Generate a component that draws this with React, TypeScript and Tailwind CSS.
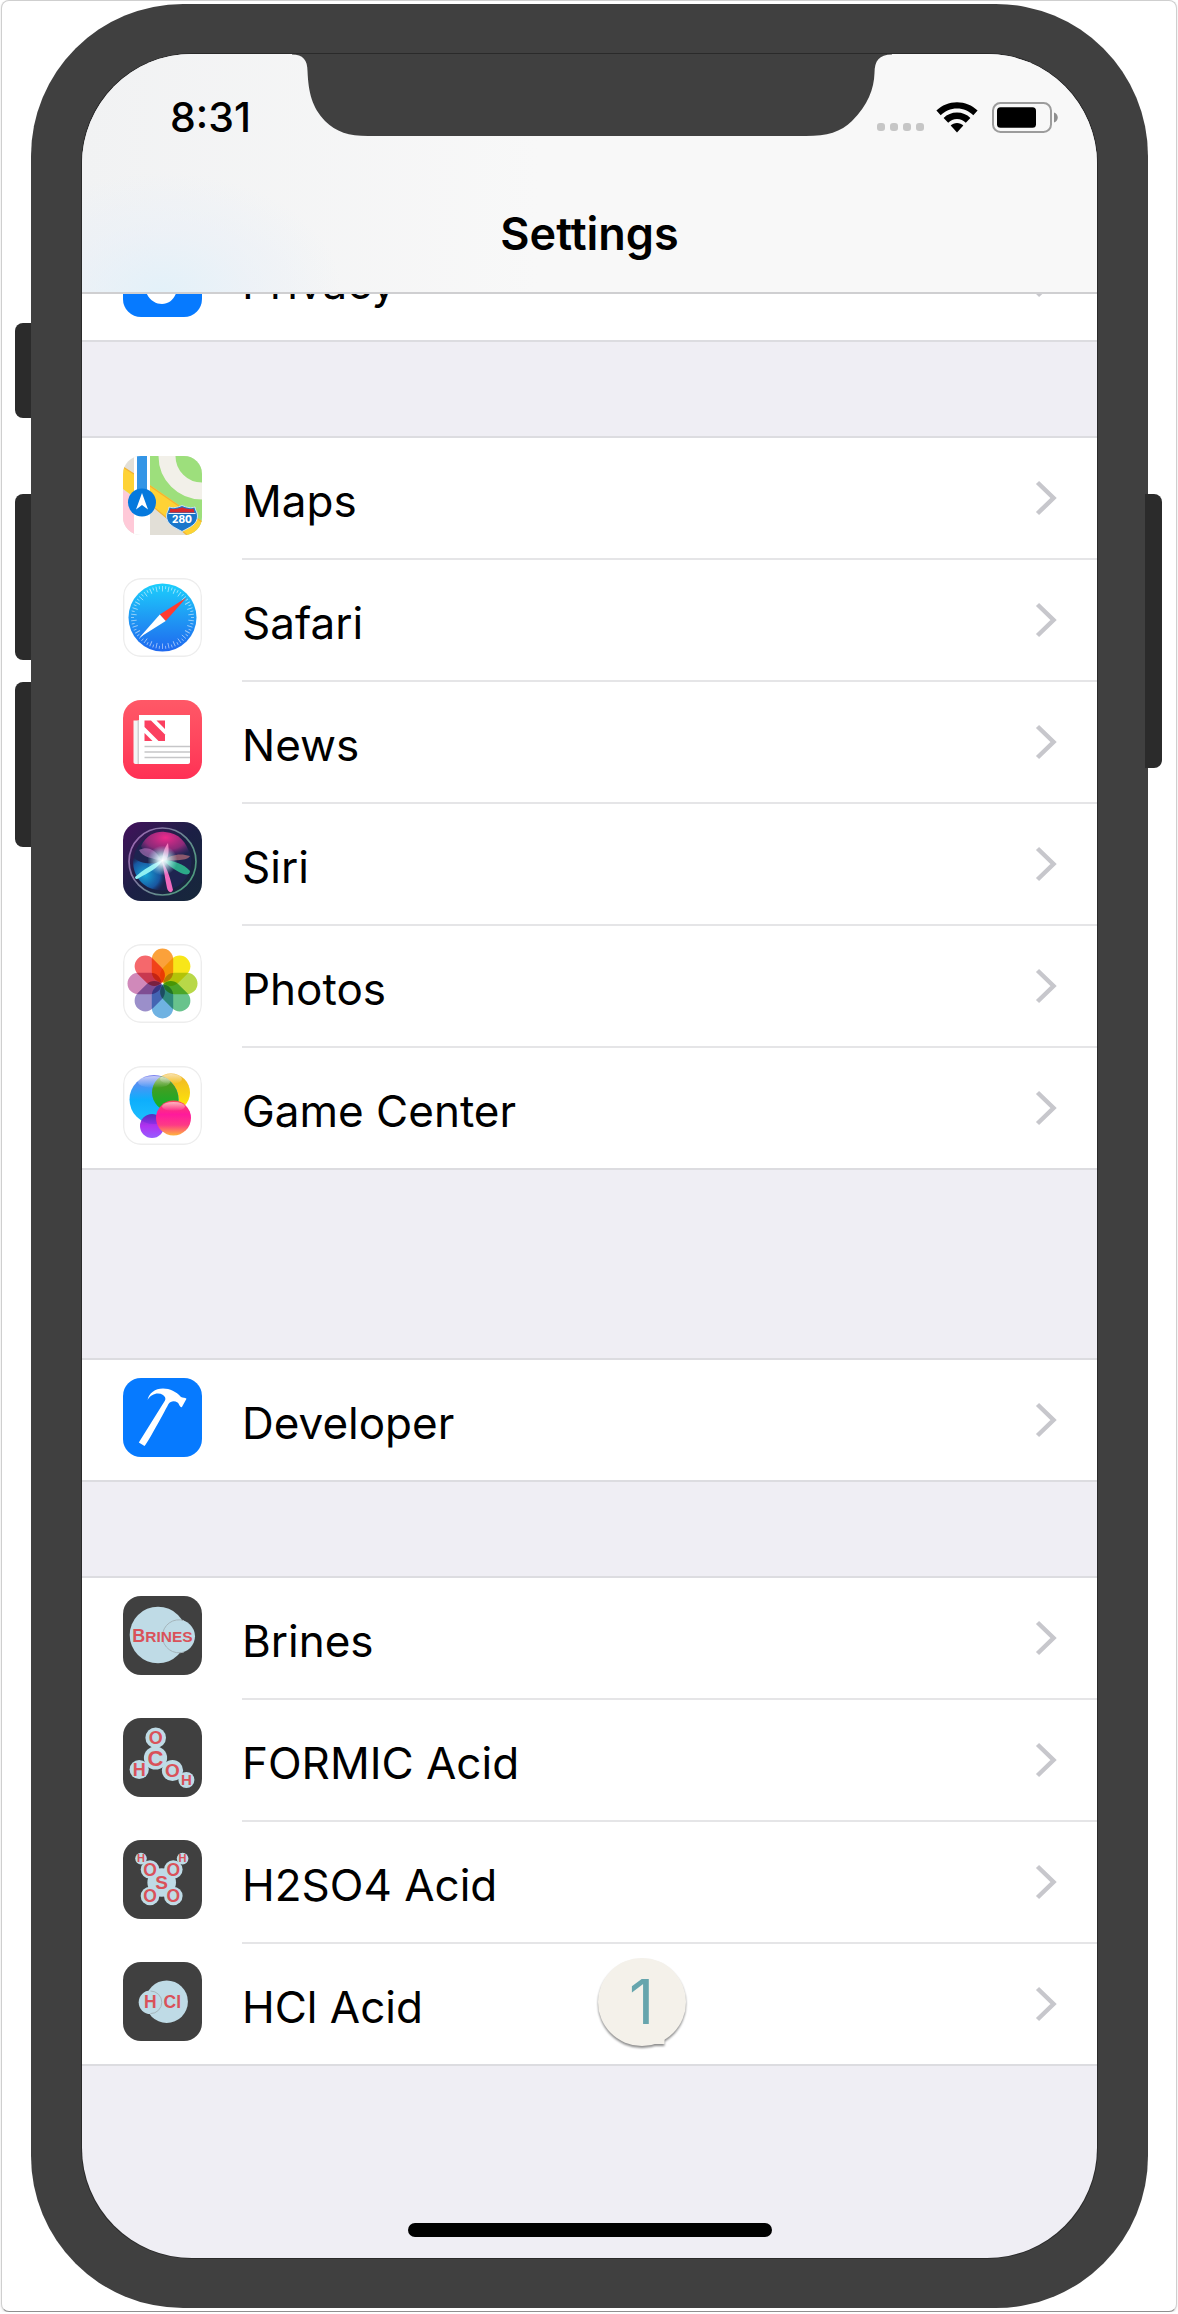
import React from 'react';

const ATOM_FILL = '#bfdbe6';
const ATOM_TEXT = '#d9525a';

interface Atom {
  label: string;
  x: number;
  y: number;
  r: number;
  size: number;
}

const formicAtoms: Atom[] = [
  { label: 'O', x: 32.7, y: 19.7, r: 10.3, size: 18 },
  { label: 'C', x: 32.5, y: 40, r: 11.6, size: 22 },
  { label: 'H', x: 16.2, y: 51.5, r: 9.6, size: 18 },
  { label: 'O', x: 49.5, y: 52.5, r: 10.6, size: 19 },
  { label: 'H', x: 63.4, y: 62, r: 8, size: 15 },
];

const sulfuricAtoms: Atom[] = [
  { label: 'S', x: 38.7, y: 42.5, r: 14.3, size: 19 },
  { label: 'H', x: 18, y: 18.6, r: 5.8, size: 11 },
  { label: 'H', x: 59.6, y: 18.6, r: 5.8, size: 11 },
  { label: 'O', x: 27, y: 29.5, r: 9.3, size: 17.5 },
  { label: 'O', x: 50.3, y: 29.5, r: 9.3, size: 17.5 },
  { label: 'O', x: 27, y: 56, r: 9.3, size: 17.5 },
  { label: 'O', x: 50.3, y: 56, r: 9.3, size: 17.5 },
];

const petals = ['#fba13a', '#f8e619', '#b8d848', '#68c38c', '#6fb2e2', '#9b8fca', '#d089ba', '#f5686c'];

const Tile: React.FC<{ className: string; children: React.ReactNode }> = ({ className, children }) => (
  <svg viewBox="0 0 79 79" aria-hidden="true" className={`h-[79px] w-[79px] shrink-0 rounded-[18px] ${className}`}>
    {children}
  </svg>
);

const OutlineRect = () => <rect x="0.7" y="0.7" width="77.6" height="77.6" rx="17.5" fill="none" stroke="#ededed" strokeWidth="1.4" />;

const Atoms: React.FC<{ atoms: Atom[] }> = ({ atoms }) => (
  <Tile className="bg-[#404040]">
    {atoms.map((atom, index) => (
      <circle key={index} cx={atom.x} cy={atom.y} r={atom.r} fill={ATOM_FILL} />
    ))}
    {atoms.map((atom, index) => (
      <text
        key={index}
        x={atom.x}
        y={atom.y + atom.size * 0.35}
        fontSize={atom.size}
        textAnchor="middle"
        fill={ATOM_TEXT}
        className="font-['Liberation_Sans',sans-serif] font-bold"
      >
        {atom.label}
      </text>
    ))}
  </Tile>
);

const PrivacyIcon = () => (
  <Tile className="bg-[#067aff]">
    <path d="M22 34V20h6V12h6V9h6v3h6v5h6v17c3 0 5 2 4 6l-2 12c-2 9-8 14-15 14S24 61 22 50z" fill="#fff" />
  </Tile>
);

const MapsIcon = () => (
  <Tile className="bg-[#e2dfd7]">
    <path d="M0 11l11 7v23L0 33z" fill="#fed235" />
    <path d="M0 11l11 7" stroke="#f2b233" strokeWidth="1.2" />
    <path d="M0 34l11 8v37H0z" fill="#ffc9d8" />
    <rect x="27" width="52" height="79" fill="#9ddf7c" />
    <circle cx="79" cy="0" r="35" fill="none" stroke="#f2f0e9" strokeWidth="17" />
    <path d="M27 45l38 34H27z" fill="#e2dfd7" />
    <path d="M27 29l52 36v14H64L27 48z" fill="#fed235" />
    <path d="M27 30l52 36M27 48l37 31" stroke="#f2b233" strokeWidth="1.2" />
    <rect x="11" width="16" height="79" fill="#fff" />
    <rect x="14" width="10" height="40" fill="#3395e6" />
    <circle cx="19" cy="46.5" r="14" fill="#0579dd" />
    <path d="M19 37l6 16.5-6-4.5-6 4.5z" fill="#fff" />
    <path
      d="M46 51c4 1.500 8 .5 13-1.500 5 2 9 3 13 1.500 0 3 2.500 5 2.500 9 0 8-7 11-15.500 15.500C50.500 71 43.500 68 43.500 60c0-4 2.500-6 2.500-9z"
      fill="#1876cb"
      stroke="#cfe4f5"
      strokeWidth="1"
    />
    <path d="M47.500 52.500c4 1 7 .5 11.500-1.200 4.500 1.700 7.500 2.200 11.500 1.200l1 4h-25z" fill="#d6262c" />
    <path d="M45.500 57.500h27" stroke="#e9f2fa" strokeWidth="1.2" />
    <text x="59" y="67" fontSize="10" textAnchor="middle" fill="#fff" className="font-[Inter,sans-serif] font-extrabold">
      280
    </text>
  </Tile>
);

const SafariIcon = () => (
  <Tile className="bg-white">
    <defs>
      <linearGradient id="safari" x1="0" y1="0" x2="0" y2="1">
        <stop offset="0" stopColor="#1ccffc" />
        <stop offset="0.5" stopColor="#1f9af4" />
        <stop offset="1" stopColor="#1f68ef" />
      </linearGradient>
    </defs>
    <OutlineRect />
    <circle cx="39.500" cy="39.500" r="34" fill="url(#safari)" />
    {Array.from({ length: 60 }, (_, i) => (
      <path
        key={i}
        d={i % 2 ? 'M39.500 8v3' : 'M39.500 8v5.500'}
        stroke="#fff"
        strokeOpacity="0.55"
        strokeWidth="0.9"
        transform={`rotate(${i * 6} 39.500 39.500)`}
      />
    ))}
    <path d="M63.500 19.500L42.700 42.900 36.800 36.500z" fill="#ff3b30" />
    <path d="M16.500 59.500L36.800 36.500 42.700 42.900z" fill="#fff" />
  </Tile>
);

const NewsIcon = () => (
  <Tile className="bg-linear-to-b from-[#ff5867] to-[#ff3055]">
    <path d="M10.500 20.500H17v43.500h-4.500c-1.200 0-2-.8-2-2z" fill="#f4f4f4" />
    <path d="M14.500 20.500H17V64h-2.500z" fill="#cfcfd1" />
    <path d="M16 15h51v47c0 1.200-.8 2-2 2H16z" fill="#fff" />
    <path d="M21.500 20.500h6.500L42 34.500V41h-6.500L21.500 27z" fill="#fb4060" />
    <path d="M33.500 20.500H42V29zM21.500 33l8 8h-8z" fill="#fb4060" />
    <path d="M21.500 46.500H67M21.500 52H67M21.500 57.500H67" stroke="#c6c6c8" strokeWidth="1.7" />
  </Tile>
);

const SiriIcon = () => (
  <Tile className="bg-linear-to-br from-[#420f5c] via-[#1b1f45] to-[#16283a]">
    <defs>
      <radialGradient id="siriPink" cx="0.5" cy="0.2" r="0.7">
        <stop offset="0" stopColor="#ee2a8c" />
        <stop offset="0.6" stopColor="#b02c86" stopOpacity="0.75" />
        <stop offset="1" stopColor="#6b2a80" stopOpacity="0" />
      </radialGradient>
      <radialGradient id="siriBlue" cx="0.35" cy="0.55" r="0.6">
        <stop offset="0" stopColor="#16a9d8" />
        <stop offset="0.7" stopColor="#1763b4" stopOpacity="0.8" />
        <stop offset="1" stopColor="#123a72" stopOpacity="0" />
      </radialGradient>
      <radialGradient id="siriGlow">
        <stop offset="0" stopColor="#fff" />
        <stop offset="0.3" stopColor="#e4fbff" stopOpacity="0.85" />
        <stop offset="1" stopColor="#9fe9f5" stopOpacity="0" />
      </radialGradient>
      <linearGradient id="siriRing" x1="0" y1="0" x2="1" y2="0.6">
        <stop offset="0" stopColor="#a262b6" />
        <stop offset="1" stopColor="#4f9a7e" />
      </linearGradient>
    </defs>
    <circle cx="39.500" cy="39.500" r="29" fill="#1e2450" />
    <path d="M10 34C16 44 34 42 39 39c2 10 5 22 6 28C28 72 10 60 10 39z" fill="url(#siriBlue)" />
    <path d="M18 24C24 12 34 9 42 10c14 1 22 10 25 24-8 4-18 5-28 5-8-2-18-6-21-15z" fill="url(#siriPink)" />
    <path d="M40 39c8-7 18-8 27-5-2 5-16 4-27 5z" fill="#c4747c" fillOpacity="0.65" />
    <path d="M39 39C32 26 24 24 16 28c4 8 14 8 23 11z" fill="#d68ad8" fillOpacity="0.5" />
    <path d="M39 38c1-8 3-13 6-17 1 7 1 12-2 18z" fill="#ff86c8" fillOpacity="0.9" />
    <path d="M40 38c10 0 21 4 27 11 0 5-6 4-11 1-6-3-11-7-16-12z" fill="#2fc193" fillOpacity="0.85" />
    <path d="M39 39c6 8 9 20 11 29-2 4-5 2-6-2-2-9-3-18-5-27z" fill="#f06abf" />
    <path d="M40 38C31 41 20 48 12 55c0 2 2 3 4 1 9-5 19-10 24-18z" fill="#8ff0f2" />
    <circle cx="39.500" cy="38.500" r="15" fill="url(#siriGlow)" />
    <circle cx="39.500" cy="39.500" r="33.500" fill="none" stroke="url(#siriRing)" strokeWidth="1.7" />
  </Tile>
);

const PhotosIcon = () => (
  <Tile className="isolate bg-white">
    <rect width="79" height="79" fill="#fff" />
    <OutlineRect />
    {petals.map((color, i) => (
      <rect
        key={color}
        x="28.800"
        y="4.500"
        width="21.400"
        height="34"
        rx="10.700"
        fill={color}
        className="mix-blend-multiply"
        transform={`rotate(${i * 45} 39.500 39.500)`}
      />
    ))}
  </Tile>
);

const GameCenterIcon = () => (
  <Tile className="isolate bg-white">
    <defs>
      <linearGradient id="gcBlue" x1="0" y1="0" x2="0" y2="1">
        <stop offset="0" stopColor="#7b80ee" />
        <stop offset="0.5" stopColor="#0eaefc" />
        <stop offset="1" stopColor="#1fc0ff" />
      </linearGradient>
      <linearGradient id="gcYellow" x1="0" y1="0" x2="0" y2="1">
        <stop offset="0" stopColor="#f0b429" />
        <stop offset="1" stopColor="#ffee00" />
      </linearGradient>
      <linearGradient id="gcGreen" x1="0" y1="0" x2="0" y2="1">
        <stop offset="0" stopColor="#67921a" />
        <stop offset="1" stopColor="#05b22c" />
      </linearGradient>
      <linearGradient id="gcPink" x1="0" y1="0" x2="0" y2="1">
        <stop offset="0" stopColor="#fa4a5c" />
        <stop offset="0.4" stopColor="#ff1a9c" />
        <stop offset="0.7" stopColor="#fd3a86" />
        <stop offset="1" stopColor="#ffb53c" />
      </linearGradient>
      <linearGradient id="gcPurple" x1="0" y1="0" x2="0" y2="1">
        <stop offset="0" stopColor="#5a20b4" />
        <stop offset="0.5" stopColor="#a81cf0" />
        <stop offset="1" stopColor="#8b4bff" />
      </linearGradient>
      <linearGradient id="gcShine" x1="0" y1="0" x2="0" y2="1">
        <stop offset="0" stopColor="#fff" stopOpacity="0.6" />
        <stop offset="1" stopColor="#fff" stopOpacity="0" />
      </linearGradient>
      <clipPath id="gcClip">
        <circle cx="31" cy="33.500" r="24.500" />
      </clipPath>
    </defs>
    <OutlineRect />
    <circle cx="48" cy="26.500" r="19" fill="url(#gcYellow)" />
    <circle cx="31" cy="33.500" r="24.500" fill="url(#gcBlue)" />
    <circle cx="48" cy="26.500" r="19" fill="url(#gcGreen)" clipPath="url(#gcClip)" />
    <ellipse cx="31" cy="16" rx="16" ry="6" fill="url(#gcShine)" />
    <ellipse cx="48" cy="13" rx="11" ry="5" fill="url(#gcShine)" />
    <circle cx="29" cy="60" r="12" fill="url(#gcPurple)" fillOpacity="0.9" />
    <circle cx="50.500" cy="52" r="17.500" fill="url(#gcPink)" />
    <ellipse cx="50.500" cy="40.500" rx="11.500" ry="4.500" fill="url(#gcShine)" />
  </Tile>
);

const DeveloperIcon = () => (
  <Tile className="bg-[#067aff]">
    <path
      d="M24.500 22C26 15 32 10.500 40 10.500c7 0 13 3 18 8.500 2 1 4 .3 5.500 1.700L58.800 29.300C56 28.500 56.500 26 54.500 24.500c-3-2-7-1.500-9 1.500-1 2-22.500 42-24 42L15.800 64.500 42 22.500c1-2 0-4-2-5.500-5-3-12-1-15.500 5z"
      fill="#fff"
    />
  </Tile>
);

const BrinesIcon = () => (
  <Tile className="bg-[#404040]">
    <circle cx="35" cy="39" r="28.300" fill={ATOM_FILL} />
    <circle cx="55.500" cy="40.300" r="16.500" fill={ATOM_FILL} />
    <path d="M61 24.600A16.500 16.500 0 1 0 61 56" fill="none" stroke="#a5b4ba" strokeWidth="1" />
    <text x="39.500" y="45.500" textAnchor="middle" fill={ATOM_TEXT} className="font-['Liberation_Sans',sans-serif] font-bold">
      <tspan fontSize="18">B</tspan>
      <tspan fontSize="15.500">RINES</tspan>
    </text>
  </Tile>
);

const HClIcon = () => (
  <Tile className="bg-[#404040]">
    <circle cx="43.700" cy="39.700" r="21.200" fill={ATOM_FILL} />
    <circle cx="27.500" cy="40.300" r="11.800" fill={ATOM_FILL} />
    <path d="M27.500 29A11.300 11.300 0 0 1 27.500 51.600" fill="none" stroke="#a5b4ba" strokeWidth="1" />
    <g fontSize="17.500" fill={ATOM_TEXT} className="font-['Liberation_Sans',sans-serif] font-bold">
      <text x="21" y="45.500">H</text>
      <text x="40.500" y="45.500">Cl</text>
    </g>
  </Tile>
);

interface Item {
  label: string;
  icon: React.ReactNode;
  marker?: string;
}

const appItems: Item[] = [
  { label: 'Maps', icon: <MapsIcon /> },
  { label: 'Safari', icon: <SafariIcon /> },
  { label: 'News', icon: <NewsIcon /> },
  { label: 'Siri', icon: <SiriIcon /> },
  { label: 'Photos', icon: <PhotosIcon /> },
  { label: 'Game Center', icon: <GameCenterIcon /> },
];

const developerItems: Item[] = [{ label: 'Developer', icon: <DeveloperIcon /> }];

const chemistryItems: Item[] = [
  { label: 'Brines', icon: <BrinesIcon /> },
  { label: 'FORMIC Acid', icon: <Atoms atoms={formicAtoms} /> },
  { label: 'H2SO4 Acid', icon: <Atoms atoms={sulfuricAtoms} /> },
  { label: 'HCl Acid', icon: <HClIcon />, marker: '1' },
];

const Marker: React.FC<{ text: string }> = ({ text }) => (
  <div className="absolute top-3.5 left-1/2 ml-2 h-[88px] w-[88px] drop-shadow-[0_2px_1px_rgba(0,0,0,0.45)]">
    <svg viewBox="0 0 88 88" aria-hidden="true" className="absolute inset-0 h-full w-full">
      <circle cx="44" cy="44" r="44" fill="#f4f1ea" />
      <path d="M52 86h14.500v-8z" fill="#f4f1ea" />
    </svg>
    <span className="relative flex h-full items-center justify-center text-[62px] leading-none text-[#66a5ad]">
      {text}
    </span>
  </div>
);

const Row: React.FC<{ item: Item; last: boolean }> = ({ item, last }) => (
  <li className={`relative ${last ? 'border-b-2 border-[#dcdce0]' : ''}`}>
    <a href="#" className="flex gap-10 pl-[41px]">
      <span className="pt-[18px]">{item.icon}</span>
      <span
        className={`flex flex-1 items-center justify-between pr-10 ${last ? 'h-[120px]' : 'h-[122px] border-b-2 border-[#e5e5e7]'}`}
      >
        <span className="pt-1.5 text-[44px] leading-[56px] whitespace-nowrap">{item.label}</span>
        <svg viewBox="0 0 22 36" aria-hidden="true" className="h-9 w-[22px] shrink-0">
          <path d="M2.500 2.500L18.500 18l-16 15.500" fill="none" stroke="#c7c7cc" strokeWidth="4.500" />
        </svg>
      </span>
    </a>
    {item.marker && <Marker text={item.marker} />}
  </li>
);

const Group: React.FC<{ items: Item[]; className: string }> = ({ items, className }) => (
  <ul className={`border-t-2 border-[#dcdce0] bg-white ${className}`}>
    {items.map((item, index) => (
      <Row key={item.label} item={item} last={index === items.length - 1} />
    ))}
  </ul>
);

const StatusIcons = () => (
  <div className="flex items-end">
    <div className="flex gap-[5px] pb-0.5">
      {[0, 1, 2, 3].map(dot => (
        <span key={dot} className="h-2 w-2 rounded-[3px] bg-[#c6c6c6]" />
      ))}
    </div>
    <svg viewBox="0 0 42 31" aria-hidden="true" className="ml-3 h-[31px] w-[42px]">
      <path d="M21 0.300C29 0.300 36 3.300 41.600 8.600L37.300 13.200C33 9 27.500 6.500 21 6.500S9 9 4.700 13.200L0.400 8.600C6 3.300 13 0.300 21 0.300z" />
      <path d="M21 10.500c5.300 0 9.800 2 13.400 5.400l-4.600 4.800C27.500 18.400 24.500 17 21 17s-6.500 1.400-8.800 3.700l-4.600-4.800C11.200 12.500 15.700 10.500 21 10.500z" />
      <path d="M21 21c2.500 0 4.800 1 6.300 2.600L21 30.600l-6.300-7C16.200 22 18.500 21 21 21z" />
    </svg>
    <svg viewBox="0 0 66 31" aria-hidden="true" className="ml-3.5 h-[31px] w-[66px]">
      <rect x="1" y="1" width="58" height="29" rx="7.500" fill="none" stroke="#9c9c9c" strokeWidth="2" />
      <rect x="5" y="5.300" width="39" height="20.400" rx="3.500" />
      <path d="M62 10.500c5 1.500 5 8.500 0 10z" fill="#8e8e8e" />
    </svg>
  </div>
);

const Header = () => (
  <header className="relative h-60 border-b-2 border-[#cfcfd1] bg-[radial-gradient(ellipse_180px_120px_at_80px_100%,#e3f1f9,#e9f0f899_50%,transparent),linear-gradient(to_right,#f1f2f3,#f8f8f8_45%,#f8f8f8)]">
    <div className="flex items-center justify-between pt-[39px] pr-[39px] pl-[88px]">
      <time className="text-[41px] leading-[48px] font-medium">8:31</time>
      <StatusIcons />
    </div>
    <h1 className="mt-[65px] text-center text-[45px] leading-[56px] font-semibold">Settings</h1>
    <svg
      viewBox="0 0 612 83"
      aria-hidden="true"
      className="absolute -top-px left-1/2 h-[83px] w-[612px] -translate-x-1/2 fill-[#404040]"
    >
      <path d="M8 0V1.500C19 1.500 23.500 7 23.500 18 24.500 40 28 54 41 68 52 79 65 83 84 83H522C543 83 557 79 568 68 584 52 590 36 590.500 20 590.500 8 595 1.500 608 1.500V0z" />
    </svg>
  </header>
);

export default function App() {
  return (
    <div className="mx-px rounded-lg border border-[#cfcfcf] border-b-[#8f8f8f] bg-white pt-[3px] pr-7 pb-[3px] pl-[29px] font-[Inter,'Liberation_Sans',sans-serif] text-black shadow-sm">
      <div className="relative rounded-[152px] bg-[#404040] px-[51px] py-[50px]">
        <span className="absolute top-[319px] -left-4 h-[95px] w-4 rounded-l-[8px] bg-[#2b2b2b]" />
        <span className="absolute top-[490px] -left-4 h-[166px] w-4 rounded-l-[8px] bg-[#2b2b2b]" />
        <span className="absolute top-[678px] -left-4 h-[165px] w-4 rounded-l-[8px] bg-[#2b2b2b]" />
        <span className="absolute top-[490px] -right-3.5 h-[274px] w-[17px] rounded-r-[8px] bg-[#2b2b2b]" />

        <main className="overflow-hidden rounded-[110px] bg-[#efeef4] ring-1 ring-[#2a2a2a]">
          <Header />
          {/* Scrolled list: only the bottom of the Privacy row shows under the header */}
          <div className="flex h-12 flex-col justify-end overflow-hidden">
            <Group items={[{ label: 'Privacy', icon: <PrivacyIcon /> }]} className="" />
          </div>
          <Group items={appItems} className="mt-[94px]" />
          <Group items={developerItems} className="mt-[188px]" />
          <Group items={chemistryItems} className="mt-[94px]" />
          <div className="mx-auto mt-[157px] mb-[21px] h-3.5 w-[364px] rounded-full bg-black" />
        </main>
      </div>
    </div>
  );
}
